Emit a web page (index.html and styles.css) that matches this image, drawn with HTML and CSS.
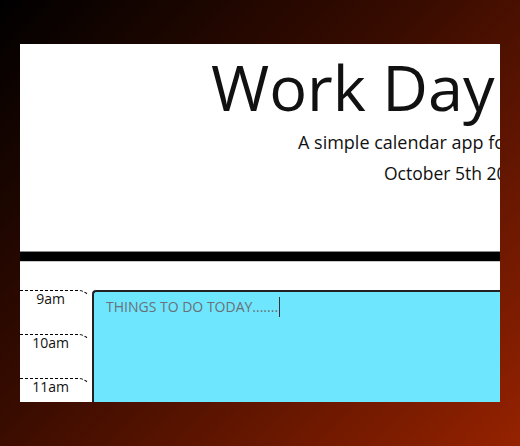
FILE: index.html
```
<!DOCTYPE html>
<html>
<head>
<meta charset="utf-8">
<link rel="stylesheet" href="styles.css">
</head>
<body>
<main class="panel">
  <header class="jumbotron">
    <h1 class="title">Work Day Scheduler</h1>
    <p class="lead">A simple calendar app for scheduling your work day</p>
    <p class="date">October 5th 2020</p>
  </header>
  <div class="bar"></div>
  <section class="planner">
    <div class="hours">
      <div class="hour">9am</div>
      <div class="hour">10am</div>
      <div class="hour">11am</div>
    </div>
    <div class="note">THINGS TO DO TODAY.......<span class="caret"></span></div>
  </section>
</main>
</body>
</html>
```
FILE: styles.css
```
html, body {
  margin: 0;
  height: 100%;
}
body {
  background: linear-gradient(135deg, #000000 0%, #3a0c00 45%, #952200 100%);
  padding: 44px 20px;
  box-sizing: border-box;
  font-family: "Open Sans", sans-serif;
  color: #111;
}
.panel {
  background: #fff;
  height: 358px;
  overflow: hidden;
  display: flex;
  flex-direction: column;
}
.jumbotron {
  white-space: nowrap;
  height: 207px;
  flex: none;
  overflow: hidden;
}
.title {
  margin: 5px 0 0 191px;
  font-size: 63px;
  font-weight: 400;
  line-height: 1.2;
}
.lead {
  margin: 5px 0 0 278px;
  font-size: 18px;
  line-height: 1.4;
}
.date {
  margin: 6px 0 0 364px;
  font-size: 17.5px;
  line-height: 1.4;
}
.bar {
  height: 9px;
  background: #000;
  border-top: 1px solid #8a8a8a;
  border-bottom: 1px solid #c8c8c8;
  flex: none;
}
.planner {
  display: flex;
  margin-top: 28px;
  flex: 1;
  min-height: 0;
}
.hours {
  width: 72px;
  flex: none;
}
.hour {
  height: 44px;
  box-sizing: border-box;
  border-top: 1px dashed #000;
  border-right: 1px dashed transparent;
  border-top-right-radius: 14px;
  padding-right: 10px;
  text-align: center;
  font-size: 14px;
  line-height: 14px;
  padding-top: 1px;
  color: #111;
}
.note {
  flex: 1;
  background: #6ee7fe;
  border-top: 2px solid #222;
  border-left: 2px solid #222;
  border-top-left-radius: 4px;
  padding: 5px 12px;
  font-size: 14px;
  line-height: 20px;
  color: #6b6f76;
  white-space: nowrap;
}
.caret {
  display: inline-block;
  width: 1px;
  height: 20px;
  background: #333;
  vertical-align: -5px;
  margin-left: 1px;
}
```
